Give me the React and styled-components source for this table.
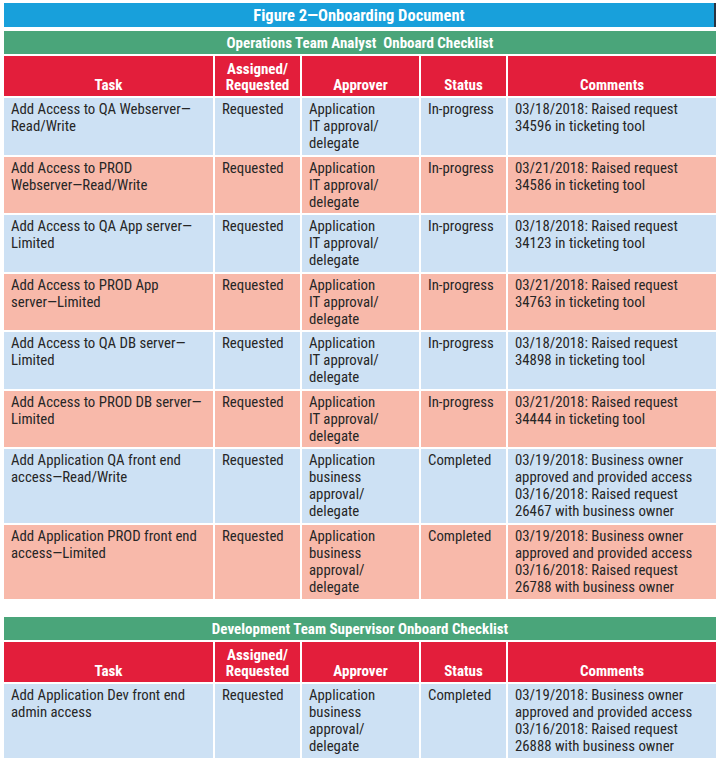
import styled, { createGlobalStyle } from "styled-components";

const GlobalStyle = createGlobalStyle`
  html, body {
    margin: 0;
    padding: 0;
    background: #ffffff;
  }
  body {
    font-family: "Roboto Condensed", "Liberation Sans Narrow", Roboto, "Liberation Sans", sans-serif;
  }
`;

const Page = styled.div`
  width: 720px;
  height: 762px;
  padding: 3px 4px 0 4px;
  box-sizing: border-box;
  overflow: hidden;
  display: flex;
  flex-direction: column;
`;

const TitleBar = styled.div`
  height: 24px;
  background: #18a0db;
  border-right: 2px solid #2b3340;
  color: #fff;
  font-weight: 700;
  font-size: 16.5px;
  display: flex;
  align-items: center;
  justify-content: center;
  margin-bottom: 4px;
`;

const Section = styled.div`
  display: flex;
  flex-direction: column;
  gap: 2px;
  margin-bottom: ${(p) => p.$space || 0}px;
`;

const Banner = styled.div`
  height: 23px;
  background: #4aa57a;
  color: #fff;
  font-weight: 700;
  font-size: 15px;
  white-space: pre;
  display: flex;
  align-items: center;
  justify-content: center;
`;

const Grid = styled.div`
  display: grid;
  grid-template-columns: 209px 85px 117px 85px 208px;
  gap: 2px;
`;

const HeadCell = styled.div`
  background: #e31e3b;
  color: #fff;
  font-weight: 700;
  font-size: 15px;
  line-height: 16px;
  height: 40px;
  box-sizing: border-box;
  padding-bottom: 3px;
  display: flex;
  align-items: flex-end;
  justify-content: center;
  text-align: center;
  white-space: pre-line;
`;

const Cell = styled.div`
  background: ${(p) => (p.$tone === "pink" ? "#f8b9aa" : "#cde1f4")};
  color: #262626;
  font-size: 14.8px;
  line-height: 17px;
  padding: 3px 4px 2px 7px;
  min-height: ${(p) => (p.$tall ? 74 : 56.5)}px;
  box-sizing: border-box;
  white-space: pre-line;
`;

const heads = ["Task", "Assigned/\nRequested", "Approver", "Status", "Comments"];

const itApprover = "Application\nIT approval/\ndelegate";
const bizApprover = "Application\nbusiness\napproval/\ndelegate";

const opsRows = [
  ["Add Access to QA Webserver\u2014\nRead/Write", "Requested", itApprover, "In-progress", "03/18/2018: Raised request\n34596 in ticketing tool"],
  ["Add Access to PROD\nWebserver\u2014Read/Write", "Requested", itApprover, "In-progress", "03/21/2018: Raised request\n34586 in ticketing tool"],
  ["Add Access to QA App server\u2014\nLimited", "Requested", itApprover, "In-progress", "03/18/2018: Raised request\n34123 in ticketing tool"],
  ["Add Access to PROD App\nserver\u2014Limited", "Requested", itApprover, "In-progress", "03/21/2018: Raised request\n34763 in ticketing tool"],
  ["Add Access to QA DB server\u2014\nLimited", "Requested", itApprover, "In-progress", "03/18/2018: Raised request\n34898 in ticketing tool"],
  ["Add Access to PROD DB server\u2014\nLimited", "Requested", itApprover, "In-progress", "03/21/2018: Raised request\n34444 in ticketing tool"],
  ["Add Application QA front end\naccess\u2014Read/Write", "Requested", bizApprover, "Completed", "03/19/2018: Business owner\napproved and provided access\n03/16/2018: Raised request\n26467 with business owner"],
  ["Add Application PROD front end\naccess\u2014Limited", "Requested", bizApprover, "Completed", "03/19/2018: Business owner\napproved and provided access\n03/16/2018: Raised request\n26788 with business owner"],
];

const devRows = [
  ["Add Application Dev front end\nadmin access", "Requested", bizApprover, "Completed", "03/19/2018: Business owner\napproved and provided access\n03/16/2018: Raised request\n26888 with business owner"],
];

function Checklist({ title, rows, space }) {
  return (
    <Section $space={space}>
      <Banner>{title}</Banner>
      <Grid>
        {heads.map((h) => (
          <HeadCell key={h}>{h}</HeadCell>
        ))}
        {rows.map((row, i) =>
          row.map((text, j) => (
            <Cell
              key={i + "-" + j}
              $tone={i % 2 ? "pink" : "blue"}
              $tall={row[4].split("\n").length > 2}
            >
              {text}
            </Cell>
          ))
        )}
      </Grid>
    </Section>
  );
}

export default function App() {
  return (
    <>
      <GlobalStyle />
      <Page>
        <TitleBar>Figure 2&mdash;Onboarding Document</TitleBar>
        <Checklist title={"Operations Team Analyst  Onboard Checklist"} rows={opsRows} space={18} />
        <Checklist title={"Development Team Supervisor Onboard Checklist"} rows={devRows} />
      </Page>
    </>
  );
}
